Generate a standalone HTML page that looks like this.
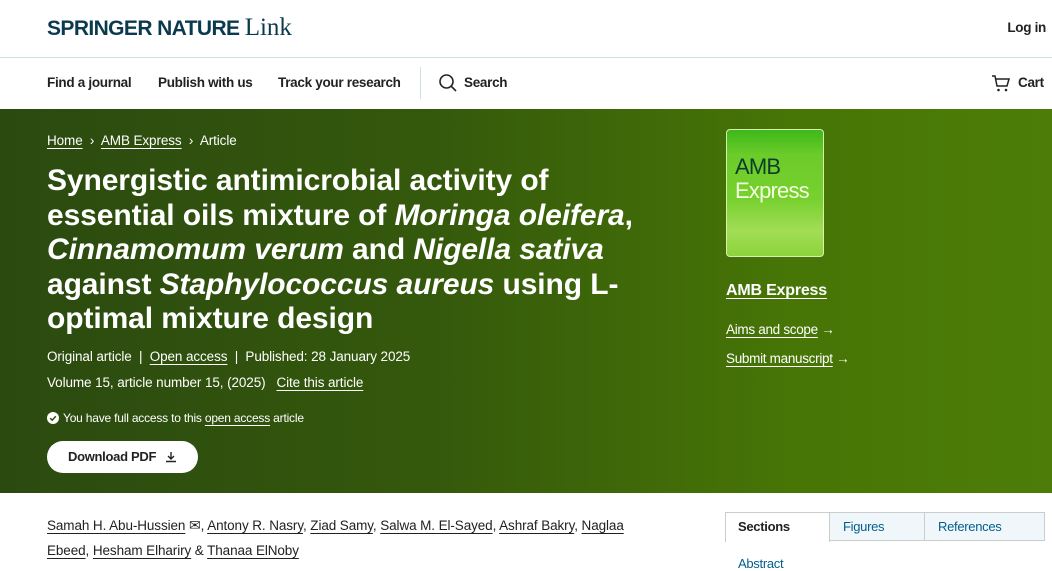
<!DOCTYPE html>
<html><head><meta charset="utf-8"><style>
*{margin:0;padding:0;box-sizing:border-box}
body{width:1052px;height:569px;overflow:hidden;font-family:"Liberation Sans",sans-serif;background:#fff;color:#222;position:relative}
.a{position:absolute;white-space:nowrap}
.nav{font-size:13.5px;font-weight:bold;color:#222;letter-spacing:-0.3px}
.ban{position:absolute;left:0;top:109px;width:1052px;height:384px;background:linear-gradient(90deg,#2b4a10 0%,#34580c 40%,#477506 75%,#4d7d08 100%)}
u{text-decoration:underline;text-underline-offset:3px}
.t{font-size:30px;font-weight:bold;line-height:34.6px;letter-spacing:-0.1px;color:#fff}
.s{font-size:13.5px;letter-spacing:-0.1px;color:#fff}
.au{font-size:13.5px;letter-spacing:-0.1px;color:#222}
</style></head><body>
<div class="a" style="left:47px;top:14px;font-size:21px;font-weight:bold;color:#0b3a4f;letter-spacing:-0.6px">SPRINGER NATURE <span style="font-family:'Liberation Serif',serif;font-weight:normal;font-size:25px;letter-spacing:0">Link</span></div>
<div class="a nav" style="right:6px;top:20px">Log in</div>
<div style="position:absolute;left:0;top:57px;width:1052px;height:1px;background:#cde0e6"></div>
<div class="a nav" style="left:47px;top:75px">Find a journal</div>
<div class="a nav" style="left:158px;top:75px">Publish with us</div>
<div class="a nav" style="left:278px;top:75px">Track your research</div>
<div style="position:absolute;left:420px;top:67px;width:1px;height:32px;background:#cde0e6"></div>
<svg class="a" style="left:438px;top:73px" width="20" height="20" viewBox="0 0 20 20"><circle cx="8.5" cy="8.5" r="6.5" fill="none" stroke="#222" stroke-width="1.6"/><path d="M13.3 13.3L18 18" stroke="#222" stroke-width="1.6"/></svg>
<div class="a nav" style="left:464px;top:75px">Search</div>
<svg class="a" style="left:991px;top:74px" width="20" height="20" viewBox="0 0 20 20"><path d="M1 2h3l2 10h10l2-7H5" fill="none" stroke="#222" stroke-width="1.5"/><circle cx="7.5" cy="16" r="1.3" fill="#222"/><circle cx="15" cy="16" r="1.3" fill="#222"/></svg>
<div class="a nav" style="left:1018px;top:75px">Cart</div>
<div class="ban"></div>
<div class="a s" style="left:47px;top:133px"><u>Home</u> &nbsp;›&nbsp; <u>AMB Express</u> &nbsp;›&nbsp; Article</div>
<div class="a t" style="left:47px;top:164px">Synergistic antimicrobial activity of<br>essential oils mixture of <i>Moringa oleifera</i>,<br><i>Cinnamomum verum</i> and <i>Nigella sativa</i><br>against <i>Staphylococcus aureus</i> using L-<br>optimal mixture design</div>
<div class="a s" style="left:47px;top:349px">Original article &nbsp;|&nbsp; <u>Open access</u> &nbsp;|&nbsp; Published: 28 January 2025</div>
<div class="a s" style="left:47px;top:375px">Volume 15, article number 15, (2025) &nbsp;&nbsp;<u>Cite this article</u></div>
<svg class="a" style="left:47px;top:412px" width="12" height="12" viewBox="0 0 12 12"><circle cx="6" cy="6" r="6" fill="#fff"/><path d="M3.2 6.2l2 2 3.6-4" fill="none" stroke="#2f520e" stroke-width="1.5"/></svg>
<div class="a" style="left:63px;top:411px;font-size:12px;letter-spacing:-0.2px;color:#fff">You have full access to this <u>open access</u> article</div>
<div class="a" style="left:47px;top:441px;width:151px;height:32px;border-radius:16px;background:#fff"></div>
<div class="a" style="left:68px;top:449px;font-size:13px;font-weight:bold;color:#222;letter-spacing:-0.3px">Download PDF</div>
<svg class="a" style="left:164px;top:450px" width="14" height="14" viewBox="0 0 14 14"><path d="M7 2v7M4 6l3 3 3-3M2 11.5h10" fill="none" stroke="#222" stroke-width="1.4"/></svg>
<div class="a" style="left:726px;top:129px;width:98px;height:128px;border-radius:4px;border:1px solid #d6f0b0;background:linear-gradient(180deg,#3db81a 0%,#6ccc2a 20%,#78d02e 55%,#a2dd56 80%,#8cd43c 100%)"></div>
<div class="a" style="left:735px;top:155px;font-size:22px;line-height:23px;color:#0d3d2a;letter-spacing:-0.8px">AMB</div>
<div class="a" style="left:735px;top:178px;font-size:22px;line-height:25px;color:#f2ffe0;letter-spacing:-0.8px">Express</div>
<div class="a" style="left:726px;top:282px;font-size:16px;font-weight:bold;color:#fff;letter-spacing:-0.2px"><u>AMB Express</u></div>
<div class="a" style="left:726px;top:322px;font-size:13.5px;color:#fff;letter-spacing:-0.3px"><u>Aims and scope</u> →</div>
<div class="a" style="left:726px;top:351px;font-size:13.5px;color:#fff;letter-spacing:-0.3px"><u>Submit manuscript</u> →</div>
<div class="a au" style="left:47px;top:517px"><u>Samah H. Abu-Hussien</u> <span style="font-size:14px">✉</span>, <u>Antony R. Nasry</u>, <u>Ziad Samy</u>, <u>Salwa M. El-Sayed</u>, <u>Ashraf Bakry</u>, <u>Naglaa</u></div>
<div class="a au" style="left:47px;top:543px"><u>Ebeed</u>, <u>Hesham Elhariry</u> &amp; <u>Thanaa ElNoby</u></div>
<div class="a" style="left:725px;top:512px;width:320px;height:29px;border:1px solid #ccc;background:#f0f7fb"></div>
<div class="a" style="left:725px;top:512px;width:105px;height:30px;background:#fff;border:1px solid #ccc;border-bottom:none"></div>
<div style="position:absolute;left:924px;top:512px;width:1px;height:29px;background:#ccc"></div>
<div class="a" style="left:738px;top:519px;font-size:13px;font-weight:bold;color:#222;letter-spacing:-0.3px">Sections</div>
<div class="a" style="left:843px;top:519px;font-size:13px;color:#025e8d;letter-spacing:-0.3px">Figures</div>
<div class="a" style="left:938px;top:519px;font-size:13px;color:#025e8d;letter-spacing:-0.3px">References</div>
<div class="a" style="left:738px;top:556px;font-size:13px;color:#025e8d;letter-spacing:-0.3px">Abstract</div>
</body></html>
